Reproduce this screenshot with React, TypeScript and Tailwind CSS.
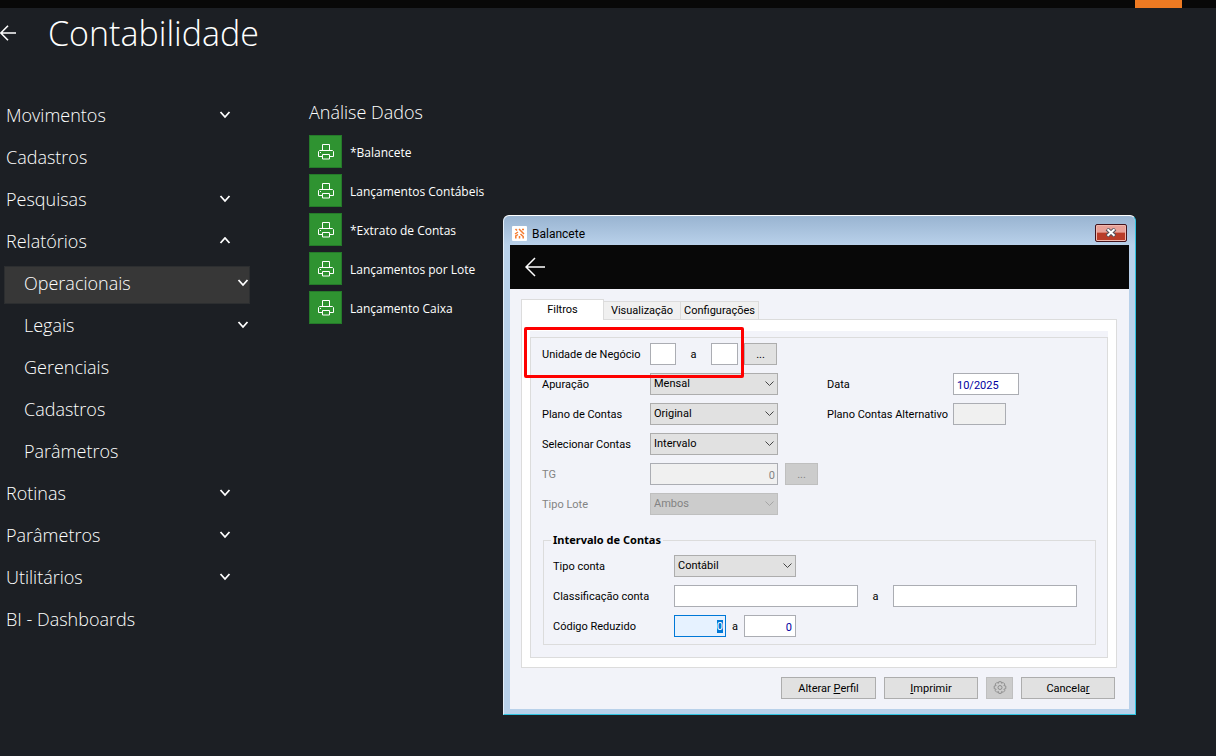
import { useState } from "react";
import type { ReactNode } from "react";
import { clsx } from "clsx";

type MenuEntry = {
  label: string;
  arrow?: "down" | "up";
  nested?: boolean;
  active?: boolean;
};

const MENU: MenuEntry[] = [
  { label: "Movimentos", arrow: "down" },
  { label: "Cadastros" },
  { label: "Pesquisas", arrow: "down" },
  { label: "Relatórios", arrow: "up" },
  { label: "Operacionais", arrow: "down", nested: true, active: true },
  { label: "Legais", arrow: "down", nested: true },
  { label: "Gerenciais", nested: true },
  { label: "Cadastros", nested: true },
  { label: "Parâmetros", nested: true },
  { label: "Rotinas", arrow: "down" },
  { label: "Parâmetros", arrow: "down" },
  { label: "Utilitários", arrow: "down" },
  { label: "BI - Dashboards" },
];

const REPORTS = [
  "*Balancete",
  "Lançamentos Contábeis",
  "*Extrato de Contas",
  "Lançamentos por Lote",
  "Lançamento Caixa",
];

const FIELD = "h-[22px] border border-[#abadb3] bg-white px-[3px] pt-0.5 text-[#00009f] outline-none";
const BUTTON = "flex h-[22px] items-center justify-center border border-[#adadad] bg-[#e1e1e1] pt-px";

function MenuArrow({ up }: { up?: boolean }) {
  return (
    <svg width="12" height="8" viewBox="0 0 12 8" fill="none" stroke="currentColor" strokeWidth="1.8">
      <path d={up ? "M1.5 6 6 1l4.5 5" : "M1.5 1 6 6l4.500-5"} />
    </svg>
  );
}

function BackArrow({ className }: { className: string }) {
  return (
    <svg viewBox="0 0 20 20" fill="none" stroke="currentColor" className={className}>
      <path d="M20 10H1M10 1 1 10l9 9" />
    </svg>
  );
}

function PrinterIcon() {
  return (
    <svg width="16" height="16" viewBox="0 0 16 16" fill="none" stroke="currentColor">
      <path d="M4.500 6.500v-6h7v6M4 12.500H.5v-5l1-1h13l1 1v5H12M4.500 10.500h7v4.500h-7z" />
      <path d="M2 8.500h1" />
    </svg>
  );
}

function AppLogo() {
  return (
    <svg width="15" height="15" viewBox="0 0 15 15">
      <rect width="15" height="15" rx="1" fill="#fff" />
      <g fill="none" stroke="#f47b30" strokeWidth="1.5">
        <path d="M3.500 3 5 4.500M7 3l5 5M10 3.500h2M3 8l3-2M3.800 12.500V10L6 8.500M7.500 12.500V10M11.200 12.500V10.500L8.500 8" />
      </g>
    </svg>
  );
}

function GearIcon() {
  return (
    <svg width="14" height="14" viewBox="0 0 14 14" fill="none" stroke="#8f8f8f">
      <path d="M5.800 .7h2.400l.4 1.600 1.500-.9 1.700 1.700-.9 1.500 1.900.4v2.700l-1.900.5.9 1.500-1.700 1.700-1.500-.9-.4 1.900H5.800l-.4-1.900-1.500.9-1.700-1.700.9-1.500-1.900-.5V5l1.900-.4-.9-1.500 1.700-1.700 1.500.9z" />
      <circle cx="7" cy="6.500" r="2" />
    </svg>
  );
}

type SelectProps = { id: string; value: string; width: string; disabled?: boolean };

function Select({ id, value, width, disabled }: SelectProps) {
  return (
    <div className={clsx("relative", width)}>
      <select
        id={id}
        disabled={disabled}
        className={clsx(
          "block h-[22px] w-full appearance-none border px-[3px] outline-none",
          disabled ? "border-[#bfbfbf] bg-[#cccccc] text-[#838383] opacity-100" : "border-[#adadad] bg-[#e1e1e1]",
        )}
      >
        <option>{value}</option>
      </select>
      <svg
        className={clsx("pointer-events-none absolute top-2 right-1", disabled ? "text-[#a5a5a5]" : "text-[#444]")}
        width="9"
        height="6"
        viewBox="0 0 9 6"
        fill="none"
        stroke="currentColor"
      >
        <path d="M.5.5l4 4 4-4" />
      </svg>
    </div>
  );
}

function Label({ htmlFor, muted, children }: { htmlFor: string; muted?: boolean; children: ReactNode }) {
  return (
    <label htmlFor={htmlFor} className={clsx("pt-0.5 whitespace-nowrap", muted && "text-[#838383]")}>
      {children}
    </label>
  );
}

function BalanceteDialog() {
  const [data, setData] = useState("10/2025");

  return (
    <section
      role="dialog"
      aria-label="Balancete"
      className="absolute top-[215px] left-[503px] w-[633px] rounded-t-md border border-t-white border-r-[#2fc3e0] border-b-[#2fc3e0] border-l-[#e4eef8] bg-[#b9d1ea] px-1.5 pb-[5px] font-[Roboto,'Noto_Sans',sans-serif] text-[11px] leading-4 text-black"
    >
      <header className="-mx-1.5 flex h-[29px] items-center rounded-t-md bg-linear-to-b from-[#99b4d1] to-[#b9d1ea] pt-1.5 pr-2 pl-2">
        <AppLogo />
        <h2 className="ml-[5px] text-[12px]">Balancete</h2>
        <button
          aria-label="Fechar"
          className="mb-0.5 ml-auto flex h-[18px] w-8 items-center justify-center rounded-xs border border-[#43131c] bg-linear-to-b from-[#e8a198] from-45% to-[#b93c28] to-50% inset-ring inset-ring-[#f0b8ae]"
        >
          <svg width="12" height="9" viewBox="0 0 12 9" fill="none">
            <path d="M2 1l8 7M10 1 2 8" stroke="#54525c" strokeWidth="4" />
            <path d="M2.500 1.300l7 6.400M9.500 1.300l-7 6.400" stroke="#fff" strokeWidth="2" />
          </svg>
        </button>
      </header>

      <div className="flex h-11 items-center bg-[#080808] pl-[15px]">
        <button aria-label="Voltar" className="text-white">
          <BackArrow className="size-5 stroke-[1.5]" />
        </button>
      </div>

      <div className="bg-[#f2f3f9] pt-2.5 pr-3 pb-2.5 pl-[11px]">
        <div role="tablist" className="relative flex items-end">
          <button role="tab" aria-selected="true" className="-mb-px h-[21px] w-[83px] border border-b-0 border-[#dcdcdc] bg-white pb-px">
            Filtros
          </button>
          <button role="tab" aria-selected="false" className="h-[18px] w-[77px] border-t border-r border-[#dcdcdc] bg-[#f0f0f0] pt-px">
            Visualização
          </button>
          <button role="tab" aria-selected="false" className="h-[18px] w-[78px] border-t border-r border-[#dcdcdc] bg-[#f0f0f0] pt-px">
            Configurações
          </button>
        </div>

        <div role="tabpanel" className="border border-[#dcdcdc] bg-white px-2 pt-[11px] pb-[9px]">
          <div className="bg-[#f2f3f9] pt-1.5">
            <div className="relative border border-[#dcdcdc] px-[11px] pt-[5px] pb-3">
              <div className="grid grid-cols-[108px_177px_126px_1fr] items-center gap-y-2">
                <Label htmlFor="unidade">Unidade de Negócio</Label>
                <div className="col-span-3 flex items-center">
                  <input id="unidade" className={clsx(FIELD, "w-[26px]")} />
                  <label htmlFor="unidade-fim" className="w-[35px] pt-0.5 text-center">a</label>
                  <input id="unidade-fim" className={clsx(FIELD, "w-[27px]")} />
                  <button aria-label="Buscar unidade" className={clsx(BUTTON, "ml-1.5 w-[33px]")}>...</button>
                </div>

                <Label htmlFor="apuracao">Apuração</Label>
                <Select id="apuracao" value="Mensal" width="w-32" />
                <Label htmlFor="data">Data</Label>
                <input id="data" value={data} onChange={(e) => setData(e.target.value)} className={clsx(FIELD, "w-[66px]")} />

                <Label htmlFor="plano">Plano de Contas</Label>
                <Select id="plano" value="Original" width="w-32" />
                <Label htmlFor="plano-alt">Plano Contas Alternativo</Label>
                <input id="plano-alt" disabled className="h-[22px] w-[53px] border border-[#abadb3] bg-[#f0f0f0]" />

                <Label htmlFor="selecionar">Selecionar Contas</Label>
                <div className="col-span-3">
                  <Select id="selecionar" value="Intervalo" width="w-32" />
                </div>

                <Label htmlFor="tg" muted>TG</Label>
                <div className="col-span-3 flex">
                  <input
                    id="tg"
                    disabled
                    defaultValue="0"
                    className="h-[22px] w-32 border border-[#abadb3] bg-[#f0f0f0] px-0.5 pt-0.5 text-right text-[#838383]"
                  />
                  <button
                    disabled
                    aria-label="Buscar TG"
                    className="ml-[7px] h-[22px] w-[33px] border border-[#bfbfbf] bg-[#cccccc] pt-px text-[#838383]"
                  >
                    ...
                  </button>
                </div>

                <Label htmlFor="tipo-lote" muted>Tipo Lote</Label>
                <div className="col-span-3">
                  <Select id="tipo-lote" value="Ambos" width="w-32" disabled />
                </div>
              </div>

              <fieldset className="mt-[17px] ml-px border border-[#dcdcdc] px-[9px] pb-[7px]">
                <legend className="-ml-0.5 px-0.5 font-['Noto_Sans',sans-serif] font-bold">Intervalo de Contas</legend>
                <div className="grid grid-cols-[121px_1fr] items-center gap-y-2 pt-[7px]">
                  <Label htmlFor="tipo-conta">Tipo conta</Label>
                  <Select id="tipo-conta" value="Contábil" width="w-[122px]" />

                  <Label htmlFor="classificacao">Classificação conta</Label>
                  <div className="flex items-center">
                    <input id="classificacao" className={clsx(FIELD, "w-[184px]")} />
                    <label htmlFor="classificacao-fim" className="w-[35px] pt-0.5 text-center">a</label>
                    <input id="classificacao-fim" className={clsx(FIELD, "w-[184px]")} />
                  </div>

                  <Label htmlFor="codigo">Código Reduzido</Label>
                  <div className="flex items-center">
                    <input
                      id="codigo"
                      autoFocus
                      onFocus={(e) => e.target.select()}
                      defaultValue="0"
                      className="h-[22px] w-[52px] border border-[#0078d7] bg-[#e6f2ff] px-0.5 text-right text-[#00009f] outline-none selection:bg-[#0078d7] selection:text-white"
                    />
                    <label htmlFor="codigo-fim" className="w-[18px] pt-0.5 text-center">a</label>
                    <input id="codigo-fim" defaultValue="0" className={clsx(FIELD, "w-[52px] text-right")} />
                  </div>
                </div>
              </fieldset>

              {/* destaque da unidade de negócio */}
              <div className="pointer-events-none absolute -top-[11px] -left-[7px] h-[51px] w-[220px] rounded-xs border-3 border-[#fe0000]" />
            </div>
          </div>
        </div>

        <footer className="mt-[9px] flex justify-end gap-2 pr-0.5">
          <button className={clsx(BUTTON, "w-[95px]")}>
            <span>Alterar <u>P</u>erfil</span>
          </button>
          <button className={clsx(BUTTON, "w-[94px]")}>
            <span><u>I</u>mprimir</span>
          </button>
          <button
            disabled
            aria-label="Configurar"
            className="flex h-[22px] w-[27px] items-center justify-center border border-[#bfbfbf] bg-[#cccccc]"
          >
            <GearIcon />
          </button>
          <button className={clsx(BUTTON, "w-[94px]")}>
            <span>Cancela<u>r</u></span>
          </button>
        </footer>
      </div>
    </section>
  );
}

export default function App() {
  return (
    <div className="relative min-h-screen overflow-hidden bg-[#1c1f24] font-['Open_Sans','Noto_Sans',sans-serif] text-white">
      <div className="flex h-2 justify-end bg-[#080808] pr-[34px]">
        <div className="w-[47px] bg-[#ee7a22]" />
      </div>

      <header className="flex h-[50px] items-center">
        <button aria-label="Voltar">
          <BackArrow className="h-4 w-4 stroke-2" />
        </button>
        <h1 className="ml-8 text-[34px] leading-[50px] font-light">Contabilidade</h1>
      </header>

      <main className="flex pt-[37px]">
        <nav className="w-[250px] shrink-0 text-lg font-light text-white">
          <ul>
            {MENU.map((item, i) => (
              <li key={i} className={clsx("h-[42px] pt-[3px] pb-px pl-1", item.nested || "pr-[18px]")}>
                <a
                  href="#"
                  className={clsx(
                    "flex h-[38px] items-center justify-between pr-px pb-1",
                    item.nested ? "pl-5" : "pl-0.5",
                    item.active && "bg-[#373737] inset-ring inset-ring-[#2c2e30]",
                  )}
                >
                  {item.label}
                  {item.arrow && <MenuArrow up={item.arrow === "up"} />}
                </a>
              </li>
            ))}
          </ul>
        </nav>

        <section className="ml-[59px]">
          <h2 className="text-lg leading-[34px] font-light">Análise Dados</h2>
          <ul className="mt-1.5 flex flex-col gap-1.5">
            {REPORTS.map((name) => (
              <li key={name}>
                <a href="#" className="flex items-center gap-2 text-[12px]">
                  <span className="flex size-[33px] items-center justify-center border border-[#257a2a] bg-[#2f9331]">
                    <PrinterIcon />
                  </span>
                  <span className="pt-0.5">{name}</span>
                </a>
              </li>
            ))}
          </ul>
        </section>
      </main>

      <BalanceteDialog />
    </div>
  );
}
